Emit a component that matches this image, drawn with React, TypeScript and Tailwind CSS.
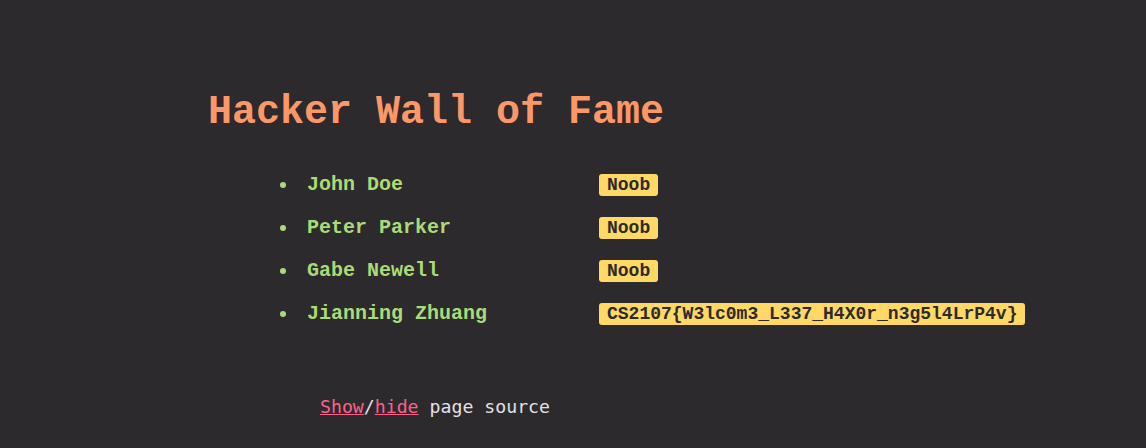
import React from "react"

const hackers = [
  { name: "John Doe", rank: "Noob" },
  { name: "Peter Parker", rank: "Noob" },
  { name: "Gabe Newell", rank: "Noob" },
  { name: "Jianning Zhuang", rank: "CS2107{W3lc0m3_L337_H4X0r_n3g5l4LrP4v}" },
]

export default function App() {
  return (
    <div className="min-h-screen w-full bg-[#2d2a2e] font-['Liberation_Mono',monospace]">
      <div className="pl-[208px] pt-[90px]">
        <h1 className="text-[40px] leading-[46px] font-bold text-[#fc9867]">Hacker Wall of Fame</h1>
        <ul className="mt-[27px] pl-[72px]">
          {hackers.map((h) => (
            <li key={h.name} className="flex h-[43px] items-center">
              <span className="mr-[21px] h-[6px] w-[6px] rounded-full bg-[#a9dc76]" />
              <span className="w-[292px] text-[20px] font-bold text-[#a9dc76]">{h.name}</span>
              <span className="rounded-[3px] bg-[#ffd866] px-[8px] text-[18px] leading-[22px] font-bold text-[#2d2a2e]">
                {h.rank}
              </span>
            </li>
          ))}
        </ul>
        <p className="mt-[58px] pl-[112px] font-['DejaVu_Sans_Mono',monospace] text-[18.2px] text-[#e3e1e4]">
          <a href="#" className="text-[#ff6188] underline">Show</a>/<a href="#" className="text-[#ff6188] underline">hide</a> page source
        </p>
      </div>
    </div>
  )
}
